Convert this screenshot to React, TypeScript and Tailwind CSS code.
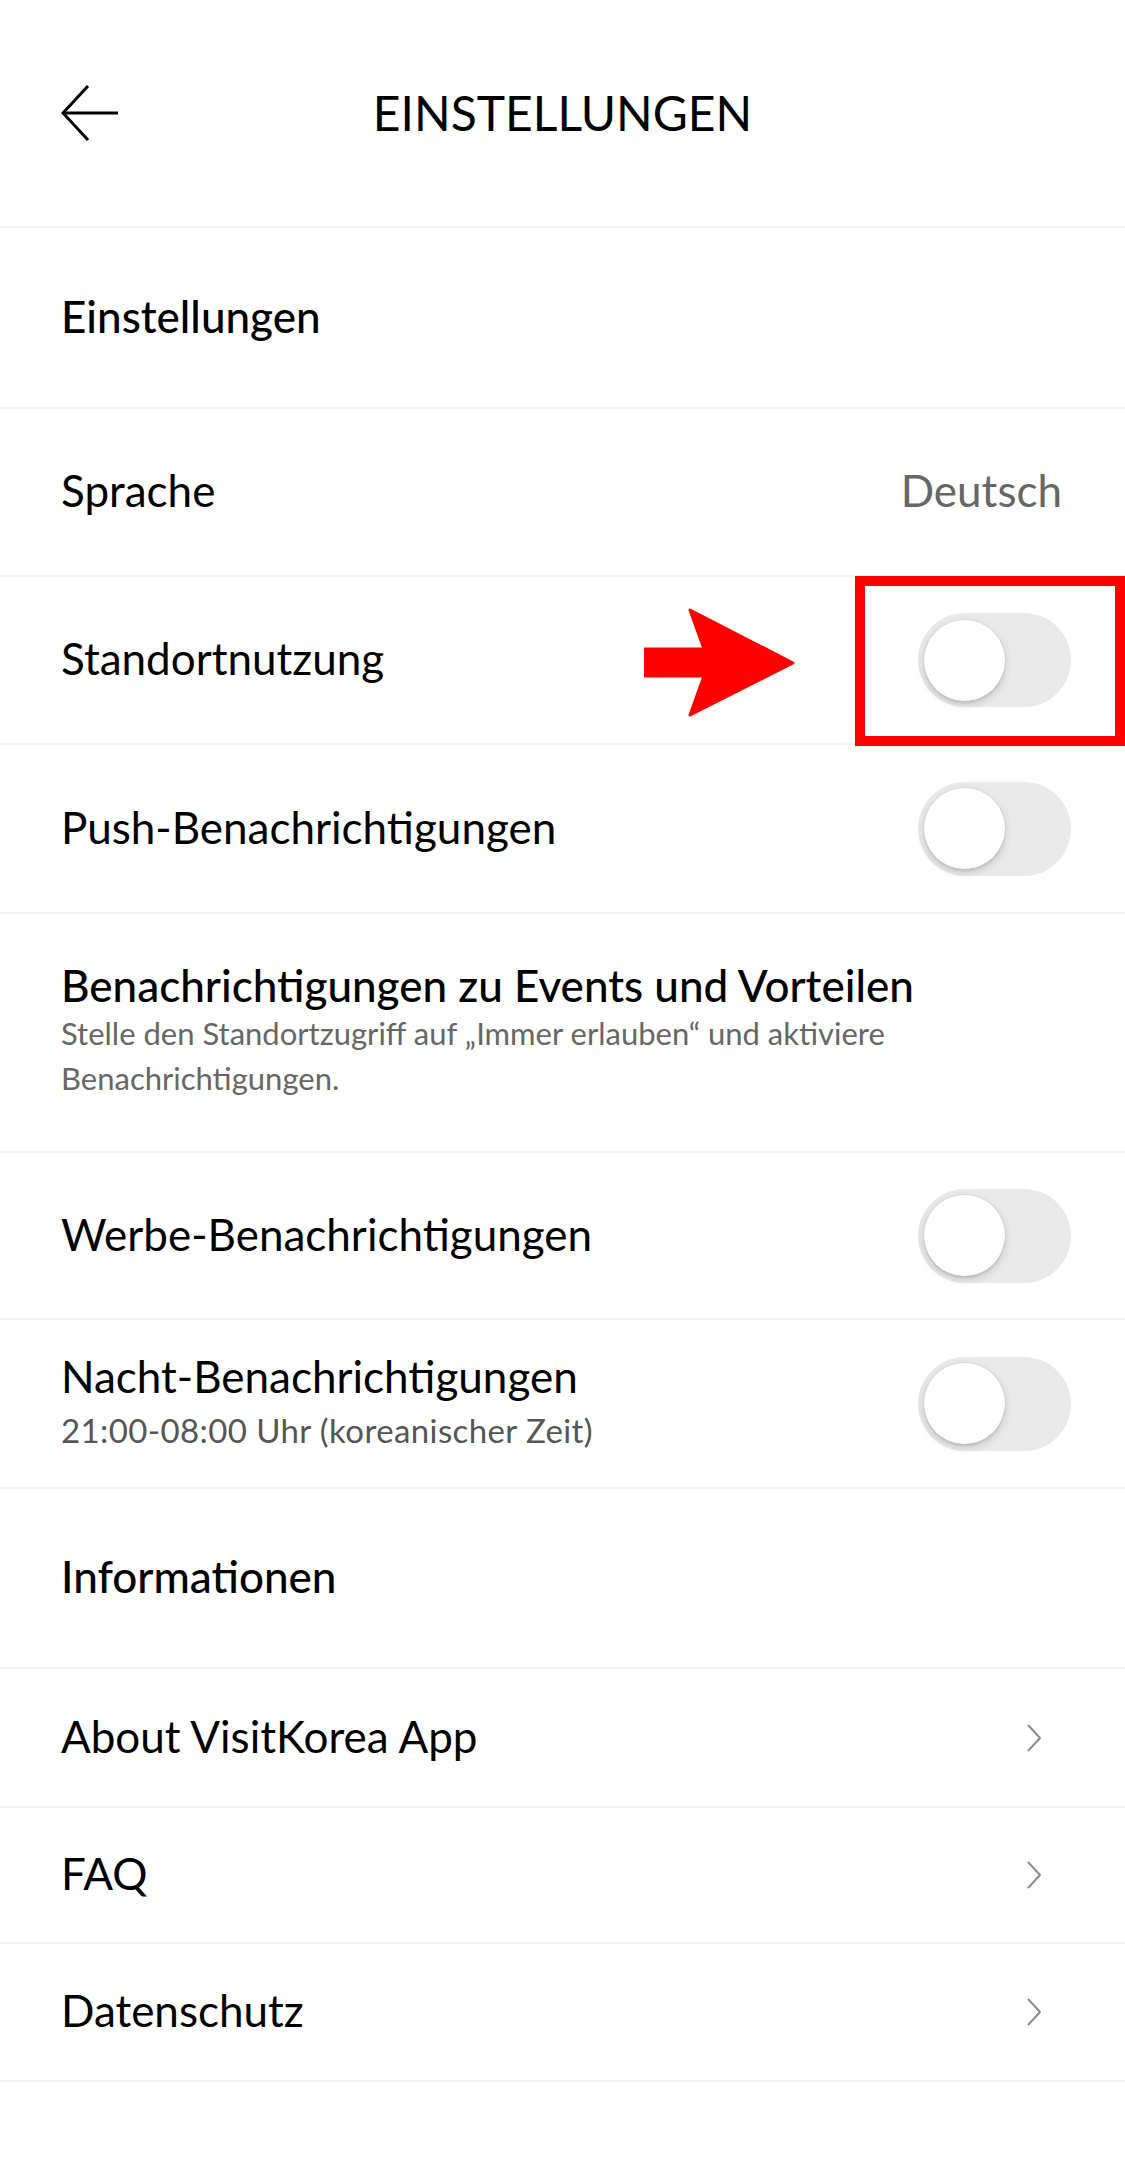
import React from "react";

// simple iOS-like switch, always off in this screen
function Toggle() {
  return (
    <div className="w-[153px] h-[94px] rounded-full bg-[#e9e9e9] flex items-center pl-[6px] shrink-0">
      <div className="w-[81px] h-[81px] rounded-full bg-white shadow-[0_3px_1px_rgba(0,0,0,0.05),0_3px_8px_rgba(0,0,0,0.16),0_0_0_1px_rgba(0,0,0,0.04)]" />
    </div>
  );
}

function Chevron() {
  return (
    <svg width="16" height="28" viewBox="0 0 16 28" fill="none" className="shrink-0">
      <polyline points="2,1 14,14 2,27" stroke="#8c8c8c" strokeWidth="2" strokeLinejoin="round" />
    </svg>
  );
}

function SectionHeader({ label, h }: { label: string; h: string }) {
  return (
    <div className={`${h} flex items-center pl-[61px] border-b-2 border-[#f3f3f3]`}>
      <span className="text-[44px] font-medium text-black mb-[4px]">{label}</span>
    </div>
  );
}

function ToggleRow({
  label,
  sub,
  h = "h-[168px]",
  children,
}: {
  label: string;
  sub?: string;
  h?: string;
  children?: React.ReactNode;
}) {
  return (
    <div className={`relative ${h} flex items-center justify-between pl-[61px] pr-[54px] border-b-2 border-[#f3f3f3]`}>
      <div className="flex flex-col mb-[4px]">
        <span className="text-[44px] leading-[52px] text-black">{label}</span>
        {sub && (
          <span className="text-[33px] leading-[45px] tracking-[0.4px] text-[#555] mt-[6px]">{sub}</span>
        )}
      </div>
      <Toggle />
      {children}
    </div>
  );
}

function LinkRow({ label, h }: { label: string; h: string }) {
  return (
    <div className={`${h} flex items-center justify-between pl-[61px] pr-[83px] border-b-2 border-[#f3f3f3]`}>
      <span className="text-[44px] text-black mb-[4px]">{label}</span>
      <Chevron />
    </div>
  );
}

export default function App() {
  return (
    <div className="w-[1125px] min-h-[2184px] bg-white font-['Lato',sans-serif]">
      {/* Header */}
      <div className="h-[228px] grid grid-cols-[1fr_auto_1fr] items-center border-b-2 border-[#f3f3f3]">
        <div className="pl-[61px]">
          <svg width="58" height="56" viewBox="0 0 58 56" fill="none">
            <line x1="2" y1="28" x2="57" y2="28" stroke="#000" strokeWidth="3" />
            <polyline points="27,1 2,28 27,55" stroke="#000" strokeWidth="3" fill="none" />
          </svg>
        </div>
        <h1 className="text-[48px] text-black">EINSTELLUNGEN</h1>
        <div />
      </div>

      <SectionHeader label="Einstellungen" h="h-[181px]" />

      <div className="h-[168px] flex items-center justify-between pl-[61px] pr-[63px] border-b-2 border-[#f3f3f3]">
        <span className="text-[44px] text-black mb-[4px]">Sprache</span>
        <span className="text-[44px] text-[#666] mb-[4px]">Deutsch</span>
      </div>

      <ToggleRow label="Standortnutzung">
        {/* annotation arrow + box */}
        <svg
          className="absolute left-[644px] top-[30px]"
          width="152"
          height="112"
          viewBox="0 0 152 112"
        >
          <polygon
            points="1,42 60,42 46,3 149,56 46,108 60,69 1,69"
            fill="#ff0000"
            stroke="#ff0000"
            strokeWidth="3"
            strokeLinejoin="round"
          />
        </svg>
        <div className="absolute left-[855px] top-[-1px] w-[270px] h-[170px] border-[10px] border-[#ff0000]" />
      </ToggleRow>

      <ToggleRow label="Push-Benachrichtigungen" h="h-[169px]" />

      <div className="h-[239px] pl-[61px] pr-[54px] pt-[45px] border-b-2 border-[#f3f3f3]">
        <div className="text-[44px] leading-[52px] font-medium text-black">
          Benachrichtigungen zu Events und Vorteilen
        </div>
        <div className="text-[31px] leading-[45px] text-[#666]">
          Stelle den Standortzugriff auf „Immer erlauben“ und aktiviere Benachrichtigungen.
        </div>
      </div>

      <ToggleRow label="Werbe-Benachrichtigungen" h="h-[167px]" />
      <ToggleRow label="Nacht-Benachrichtigungen" sub="21:00-08:00 Uhr (koreanischer Zeit)" h="h-[169px]" />

      <SectionHeader label="Informationen" h="h-[180px]" />

      <LinkRow label="About VisitKorea App" h="h-[139px]" />
      <LinkRow label="FAQ" h="h-[136px]" />
      <LinkRow label="Datenschutz" h="h-[138px]" />
    </div>
  );
}
